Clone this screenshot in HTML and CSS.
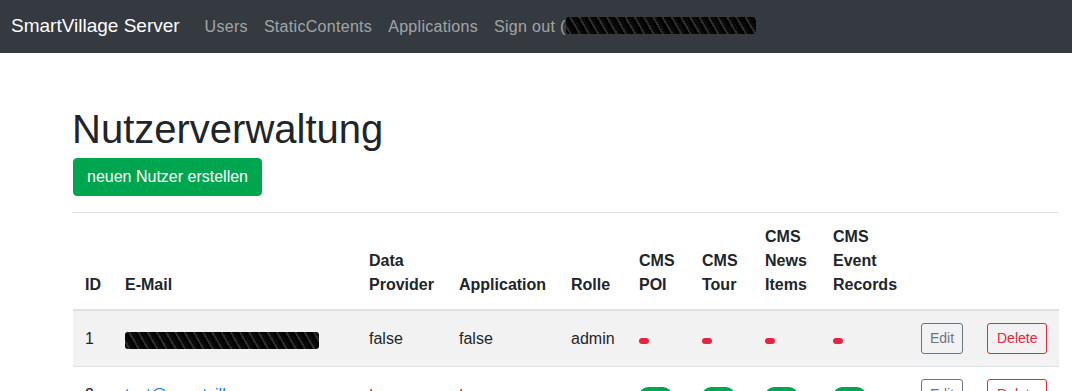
FILE: index.html
```html
<!DOCTYPE html>
<html lang="de">
<head>
    <meta charset="UTF-8">
    <meta name="viewport" content="width=device-width, initial-scale=1.0">
    <title>SmartVillage Server</title>
    <link rel="stylesheet" href="styles.css">
</head>
<body>
    <!-- Navigation -->
    <nav class="navbar">
        <a class="navbar-brand" href="#">SmartVillage Server</a>
        <a class="nav-link" href="#">Users</a>
        <a class="nav-link" href="#">StaticContents</a>
        <a class="nav-link" href="#">Applications</a>
        <a class="nav-link" href="#">Sign out (<span class="redacted redacted-nav"></span></a>
    </nav>

    <main class="container">
        <h1>Nutzerverwaltung</h1>
        <button class="btn btn-success">neuen Nutzer erstellen</button>
        <hr>

        <table class="table">
            <colgroup>
                <col class="col-id">
                <col class="col-mail">
                <col class="col-provider">
                <col class="col-app">
                <col class="col-role">
                <col class="col-poi">
                <col class="col-tour">
                <col class="col-news">
                <col class="col-event">
                <col class="col-edit">
                <col class="col-delete">
            </colgroup>
            <thead>
                <tr>
                    <th>ID</th>
                    <th>E-Mail</th>
                    <th>Data<br>Provider</th>
                    <th>Application</th>
                    <th>Rolle</th>
                    <th>CMS<br>POI</th>
                    <th>CMS<br>Tour</th>
                    <th>CMS<br>News<br>Items</th>
                    <th>CMS<br>Event<br>Records</th>
                    <th></th>
                    <th></th>
                </tr>
            </thead>
            <tbody>
                <tr class="striped">
                    <td>1</td>
                    <td><span class="redacted redacted-mail"></span></td>
                    <td>false</td>
                    <td>false</td>
                    <td>admin</td>
                    <td><span class="badge badge-danger"></span></td>
                    <td><span class="badge badge-danger"></span></td>
                    <td><span class="badge badge-danger"></span></td>
                    <td><span class="badge badge-danger"></span></td>
                    <td><button class="btn btn-sm btn-outline-secondary">Edit</button></td>
                    <td><button class="btn btn-sm btn-outline-danger">Delete</button></td>
                </tr>
                <tr>
                    <td>2</td>
                    <td><a class="mail-link" href="#">test@smartvillage.app</a></td>
                    <td>true</td>
                    <td>true</td>
                    <td>user</td>
                    <td><span class="badge badge-success">true</span></td>
                    <td><span class="badge badge-success">true</span></td>
                    <td><span class="badge badge-success">true</span></td>
                    <td><span class="badge badge-success">true</span></td>
                    <td><button class="btn btn-sm btn-outline-secondary">Edit</button></td>
                    <td><button class="btn btn-sm btn-outline-danger">Delete</button></td>
                </tr>
            </tbody>
        </table>
    </main>
</body>
</html>
```

FILE: styles.css
```css
* {
    margin: 0;
    padding: 0;
    box-sizing: border-box;
}

body {
    font-family: "Liberation Sans", Arial, sans-serif;
    font-size: 16px;
    line-height: 1.5;
    color: #212529;
    background-color: #fff;
}

/* Navigation */
.navbar {
    display: flex;
    align-items: center;
    height: 53px;
    padding: 0 11px;
    background-color: #343a40;
}

.navbar a {
    text-decoration: none;
}

.navbar-brand {
    font-size: 19px;
    color: #fff;
    margin-right: 17px;
}

.nav-link {
    padding: 0 8px;
    letter-spacing: 0.3px;
    color: rgba(255, 255, 255, 0.55);
}

.redacted {
    display: inline-block;
    vertical-align: middle;
    background-color: #141414;
    background-image: repeating-linear-gradient(60deg, #000 0 3px, #2c2c2c 3px 5px, #0a0a0a 5px 8px);
    border-radius: 3px;
}

.redacted-nav {
    width: 190px;
    height: 17px;
    margin-top: -3px;
}

.redacted-mail {
    width: 194px;
    height: 17px;
    margin-top: 2px;
}

/* Inhalt */
.container {
    padding: 52px 14px 0 72px;
}

h1 {
    font-size: 40px;
    font-weight: 400;
    line-height: 1.2;
    margin-bottom: 5px;
}

hr {
    border: none;
    border-top: 1px solid #e2e2e2;
    margin-top: 16px;
}

.btn {
    display: inline-block;
    font-family: inherit;
    font-size: 16px;
    line-height: 1.5;
    padding: 6px 12px;
    border: 1px solid transparent;
    border-radius: 4px;
    background: transparent;
    cursor: pointer;
    vertical-align: middle;
}

.btn-success {
    background-color: #00a64f;
    border-color: #00a64f;
    color: #fff;
    padding: 6px 13px;
    margin-left: 1px;
}

.btn-sm {
    font-size: 14px;
    padding: 4px 8px;
    border-radius: 3px;
}

.btn-outline-secondary {
    color: #6c757d;
    border-color: #6c757d;
}

.btn-outline-danger {
    color: #e4263f;
    border-color: #e4263f;
    padding: 4px 9px;
}

/* Tabelle */
.table {
    width: 986px;
    table-layout: fixed;
    border-collapse: collapse;
    margin-left: 1px;
}

.col-id { width: 40px; }
.col-mail { width: 244px; }
.col-provider { width: 90px; }
.col-app { width: 112px; }
.col-role { width: 68px; }
.col-poi { width: 63px; }
.col-tour { width: 63px; }
.col-news { width: 68px; }
.col-event { width: 88px; }
.col-edit { width: 66px; }
.col-delete { width: 84px; }

.table th,
.table td {
    padding: 12px;
    text-align: left;
    vertical-align: middle;
    white-space: nowrap;
    border-top: 1px solid #dee2e6;
}

.table thead th {
    font-weight: 700;
    vertical-align: bottom;
    border-top: none;
    border-bottom: 2px solid #dee2e6;
}

.table tr.striped {
    background-color: #f2f2f2;
}

.mail-link {
    color: #007bff;
    text-decoration: none;
}

.badge {
    display: inline-block;
    font-size: 12px;
    font-weight: 700;
    line-height: 1;
    padding: 3px 5px;
    border-radius: 10px;
    color: #fff;
}

.badge-danger {
    background-color: #e4263f;
}

.badge-success {
    background-color: #00a64f;
}
```
